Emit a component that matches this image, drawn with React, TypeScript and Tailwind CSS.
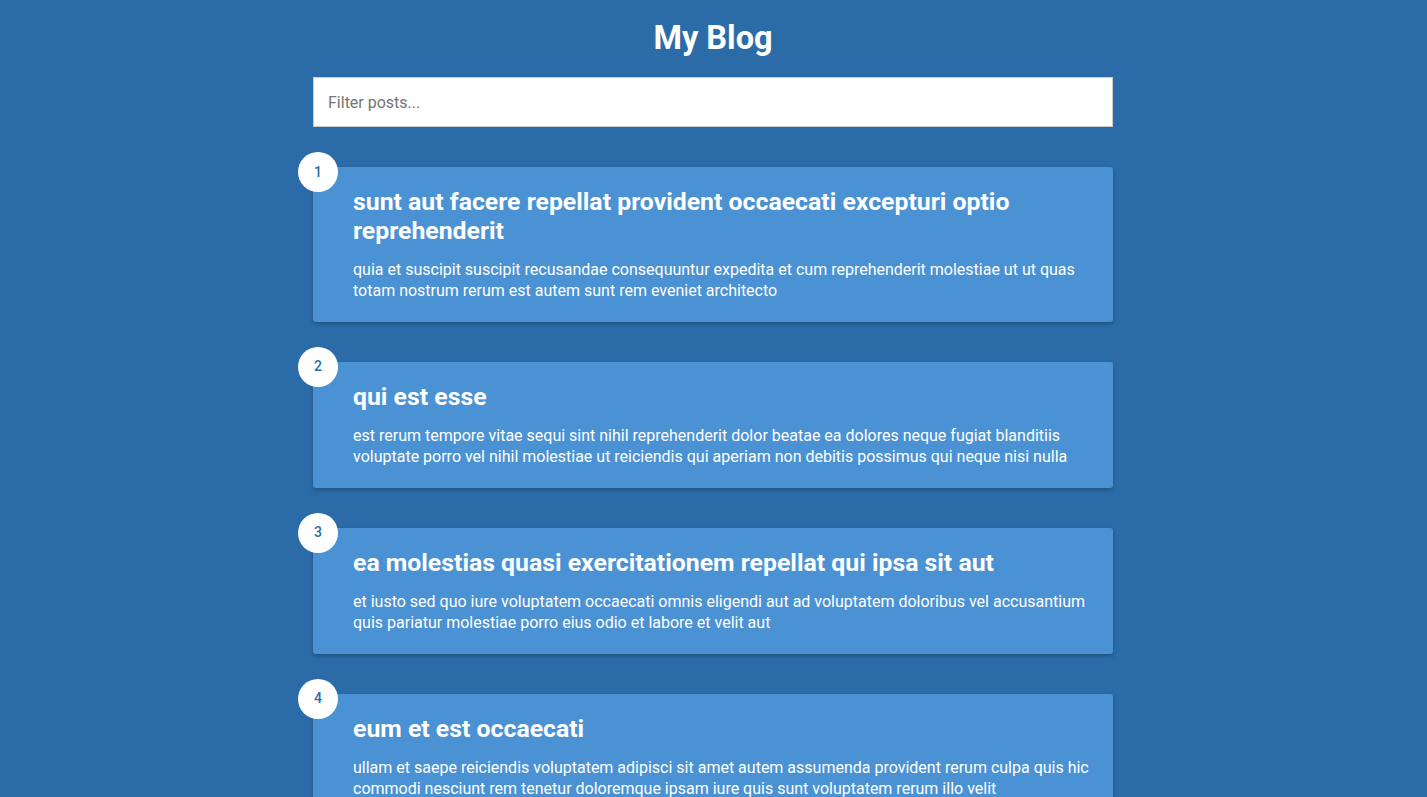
import React, { useState } from "react";

const posts = [
  {
    id: 1,
    title: "sunt aut facere repellat provident occaecati excepturi optio reprehenderit",
    body: "quia et suscipit suscipit recusandae consequuntur expedita et cum reprehenderit molestiae ut ut quas totam nostrum rerum est autem sunt rem eveniet architecto",
  },
  {
    id: 2,
    title: "qui est esse",
    body: "est rerum tempore vitae sequi sint nihil reprehenderit dolor beatae ea dolores neque fugiat blanditiis voluptate porro vel nihil molestiae ut reiciendis qui aperiam non debitis possimus qui neque nisi nulla",
  },
  {
    id: 3,
    title: "ea molestias quasi exercitationem repellat qui ipsa sit aut",
    body: "et iusto sed quo iure voluptatem occaecati omnis eligendi aut ad voluptatem doloribus vel accusantium quis pariatur molestiae porro eius odio et labore et velit aut",
  },
  {
    id: 4,
    title: "eum et est occaecati",
    body: "ullam et saepe reiciendis voluptatem adipisci sit amet autem assumenda provident rerum culpa quis hic commodi nesciunt rem tenetur doloremque ipsam iure quis sunt voluptatem rerum illo velit",
  },
  {
    id: 5,
    title: "nesciunt quas odio",
    body: "repudiandae veniam quaerat sunt sed alias aut fugiat sit autem sed est voluptatem omnis possimus esse voluptatibus quis est aut tenetur dolor neque",
  },
];

export default function App() {
  const [filter, setFilter] = useState("");
  const shown = posts.filter(
    (p) => p.title.includes(filter) || p.body.includes(filter)
  );
  return (
    <div
      className="min-h-screen bg-[#2b6ca8] text-white pt-[20px] pb-[40px] pr-[1px]"
      style={{ fontFamily: "Roboto, 'Noto Sans', sans-serif" }}
    >
      <div className="mx-auto w-[800px]">
        <h1 className="text-center text-[32.5px] font-bold leading-[37px] mb-[20px]">
          My Blog
        </h1>
        <input
          type="text"
          value={filter}
          onChange={(e) => setFilter(e.target.value)}
          placeholder="Filter posts..."
          className="block w-full h-[50px] bg-white border border-[#cccccc] px-[14px] text-[16px] text-[#333] placeholder:text-[#757575] outline-none mb-[40px]"
        />
        <div className="flex flex-col gap-[40px]">
          {shown.map((p) => (
            <div
              key={p.id}
              className="relative bg-[#4a92d4] rounded-[3px] shadow-[0_2px_4px_rgba(0,0,0,0.25)] pt-[21px] pb-[20px] pl-[40px] pr-[20px]"
            >
              <div className="absolute -left-[15px] -top-[15px] w-[40px] h-[40px] rounded-full bg-white flex items-center justify-center text-[14px] font-medium text-[#2b6ca8]">
                {p.id}
              </div>
              <h2 className="text-[24.8px] font-bold leading-[28.5px]">{p.title}</h2>
              <p className="mt-[15px] text-[16px] font-normal leading-[1.3]">
                {p.body}
              </p>
            </div>
          ))}
        </div>
      </div>
    </div>
  );
}
